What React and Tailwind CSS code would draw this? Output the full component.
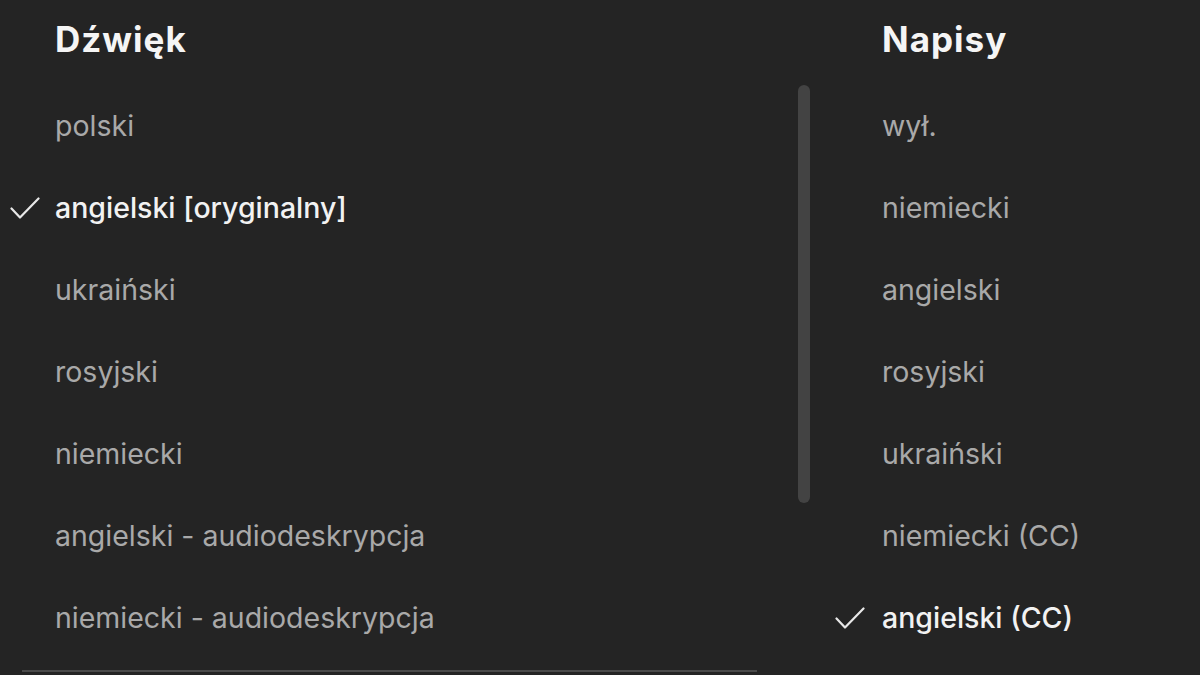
const audio = [
  { label: 'polski' },
  { label: 'angielski [oryginalny]', selected: true },
  { label: 'ukraiński' },
  { label: 'rosyjski' },
  { label: 'niemiecki' },
  { label: 'angielski - audiodeskrypcja' },
  { label: 'niemiecki - audiodeskrypcja' },
];

const subtitles = [
  { label: 'wył.' },
  { label: 'niemiecki' },
  { label: 'angielski' },
  { label: 'rosyjski' },
  { label: 'ukraiński' },
  { label: 'niemiecki (CC)' },
  { label: 'angielski (CC)', selected: true },
];

const Check = () => (
  <svg width="30" height="22" viewBox="0 0 30 22" fill="none" stroke="#e8e8e8" strokeWidth="2.2" strokeLinecap="round" strokeLinejoin="round">
    <polyline points="1.5,11.5 10,20.5 28.5,1.5" />
  </svg>
);

const Option = ({ label, selected, checkPad }) => (
  <li className="flex h-[82px] items-center">
    <div className={`flex w-[55px] shrink-0 items-center ${checkPad}`}>{selected && <Check />}</div>
    <span className={selected ? 'font-medium text-[#f2f2f2]' : 'text-[#a9a9a9]'}>{label}</span>
  </li>
);

export default function App() {
  return (
    <div
      className="grid h-[675px] w-[1200px] grid-cols-[790px_37px_1fr] overflow-hidden bg-[#242424] text-[28.5px] leading-none"
      style={{ fontFamily: 'Inter, "Liberation Sans", sans-serif' }}
    >
      <section>
        <h2 className="flex h-[85px] items-center pb-[6px] pl-[55px] text-[35px] font-bold tracking-[1px] text-[#f5f5f5]">Dźwięk</h2>
        <ul>
          {audio.map((a) => (
            <Option key={a.label} {...a} checkPad="pl-[10px]" />
          ))}
        </ul>
        <div className="ml-[22px] mt-[11px] h-[2px] w-[735px] bg-[#4a4a4a]" />
      </section>

      <div className="pl-[8px] pt-[85px]">
        <div className="h-[418px] w-[12px] rounded-full bg-[#434343]" />
      </div>

      <section>
        <h2 className="flex h-[85px] items-center pb-[6px] pl-[55px] text-[35px] font-bold tracking-[1px] text-[#f5f5f5]">Napisy</h2>
        <ul>
          {subtitles.map((s) => (
            <Option key={s.label} {...s} checkPad="pl-[8px]" />
          ))}
        </ul>
      </section>
    </div>
  );
}
